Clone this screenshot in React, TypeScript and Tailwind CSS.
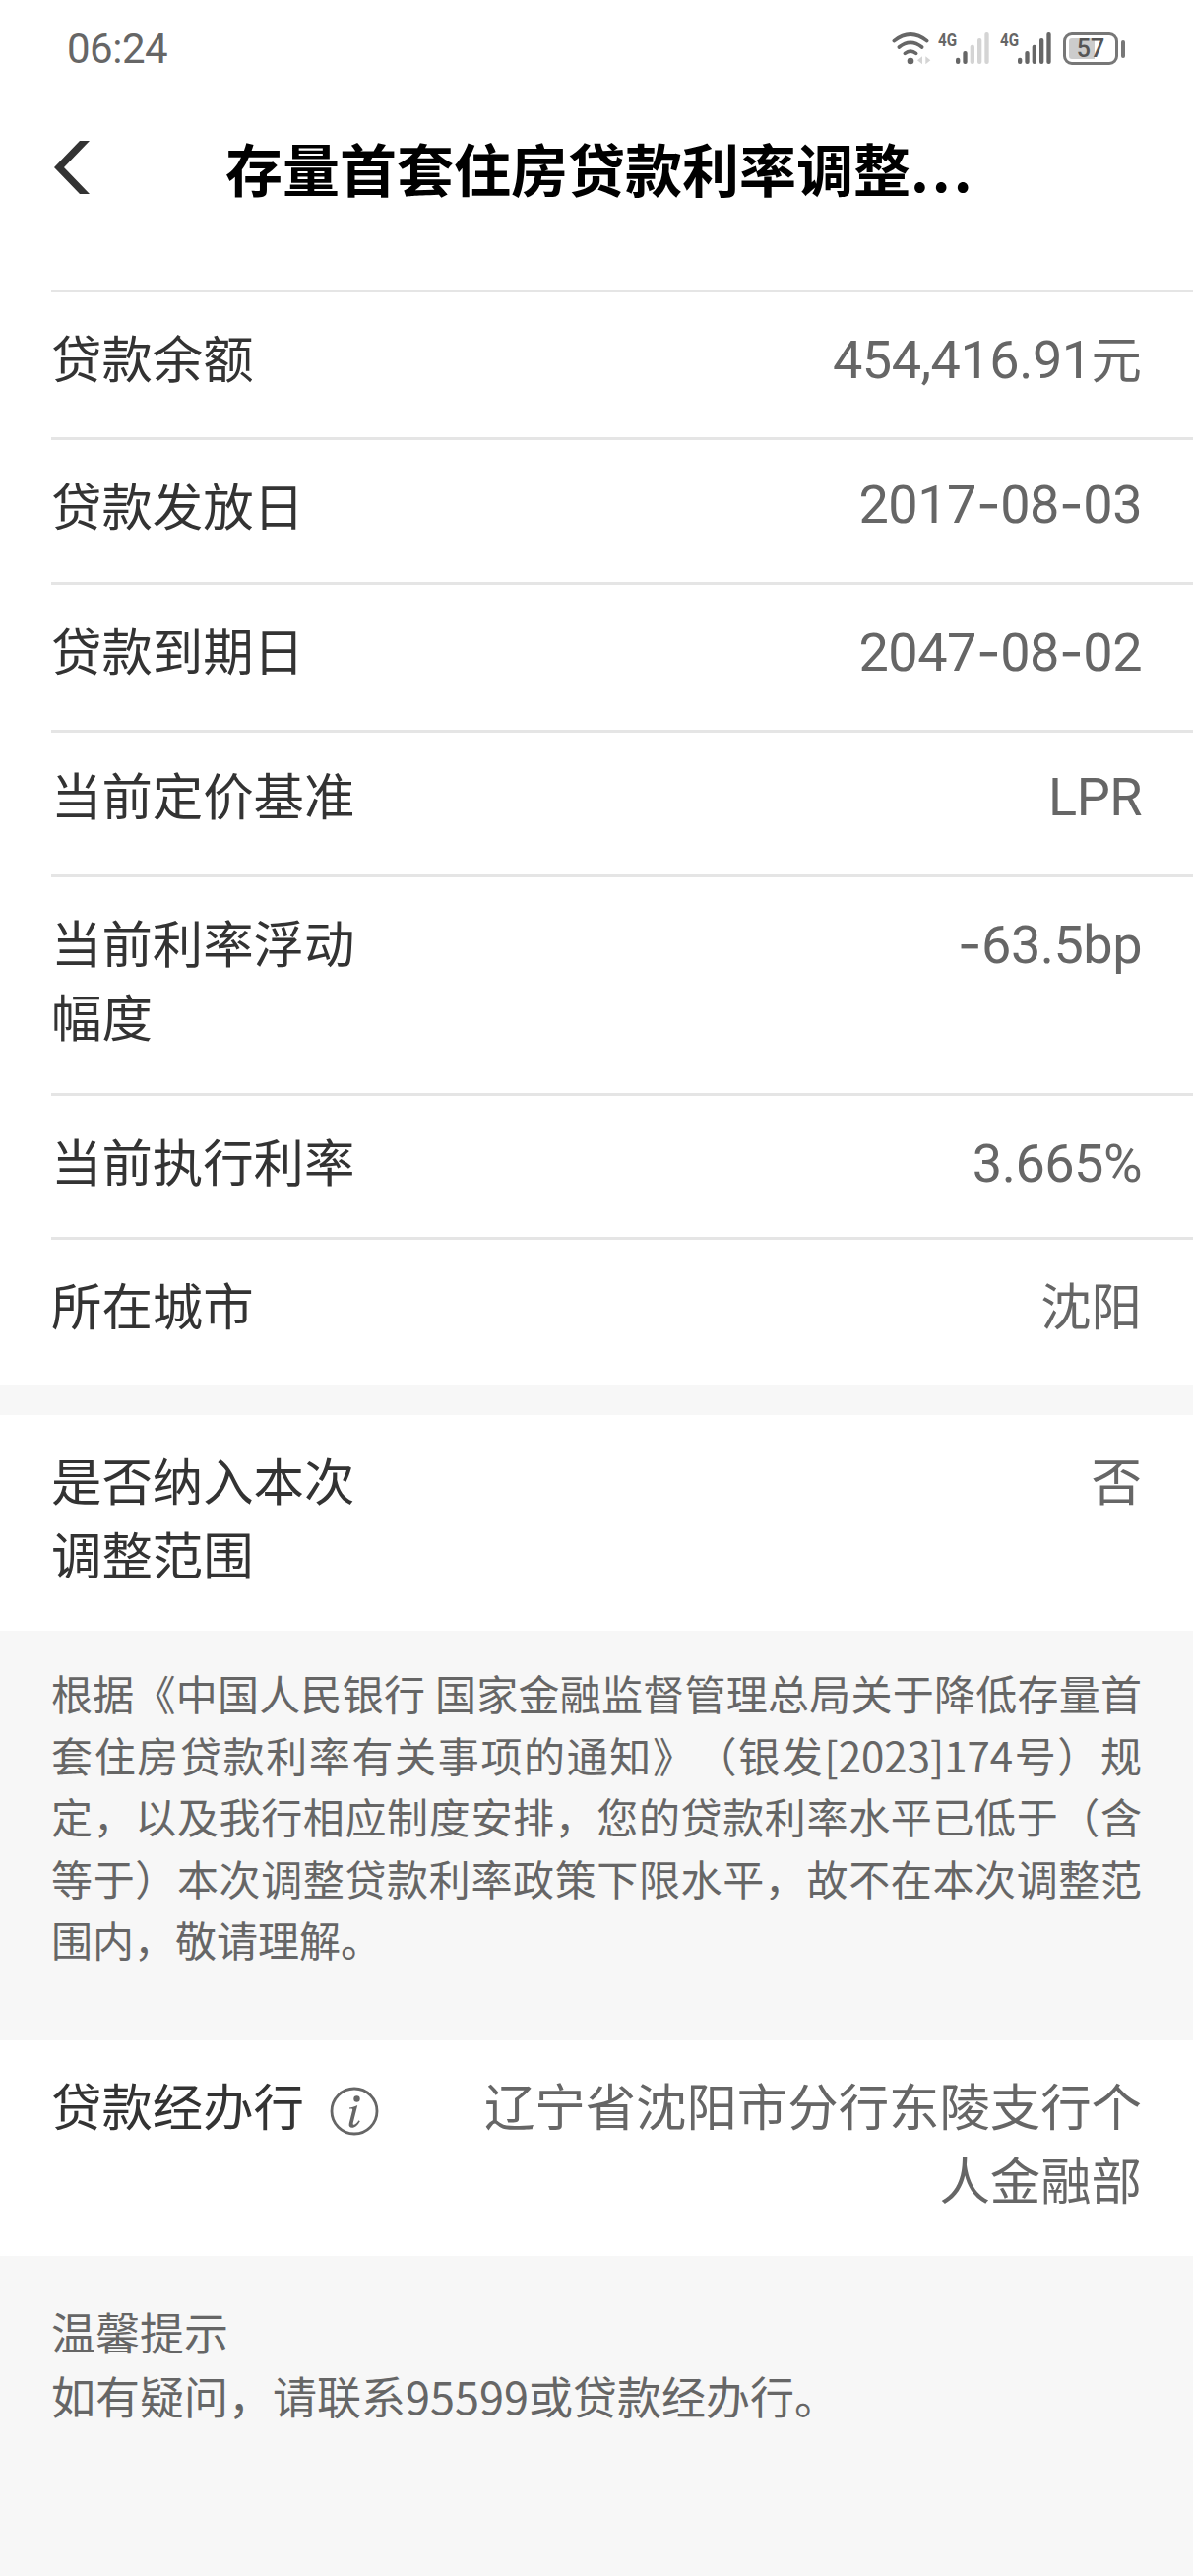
import React from 'react';

interface RowProps {
  label: React.ReactNode;
  value: React.ReactNode;
  className: string;
  valueClassName?: string;
}

// Latin letters and digits; hyphens are set wider than the digits' own font has them
const Num: React.FC<{ text: string }> = ({ text }) => (
  <span className="font-['Roboto',sans-serif] text-[54px] tracking-[-0.5px]">
    {text.split(/(-)/).map((part, i) =>
      part === '-' ? (
        <span key={i} className="font-['Inter',sans-serif]">-</span>
      ) : (
        part
      )
    )}
  </span>
);

const Row: React.FC<RowProps> = ({ label, value, className, valueClassName = '' }) => (
  <div className={`flex justify-between pr-[52px] leading-[75px] ${className}`}>
    <div className="text-[#333333] whitespace-nowrap">{label}</div>
    <div className={`text-right text-[#666666] whitespace-nowrap ${valueClassName}`}>{value}</div>
  </div>
);

const WifiIcon = () => (
  <svg width="40" height="33" viewBox="0 0 120 99" className="shrink-0">
    <g fill="none" stroke="#666666" strokeWidth="11" strokeLinecap="round">
      <path d="M7 26Q57 -14 107 26" />
      <path d="M22 45Q57 17 92 45" />
      <path d="M40 64Q57 51 74 64" />
    </g>
    <circle cx="57" cy="87" r="10" fill="#666666" />
    <path d="M93 73v24L78 85z" fill="#d4d4d4" />
    <path d="M103 73v24l15-12z" fill="#d4d4d4" />
  </svg>
);

const SignalIcon: React.FC<{ level: number }> = ({ level }) => (
  <svg width="34" height="32" viewBox="0 0 102 96" className="shrink-0">
    {[77, 57, 38, 18, 0].map((top, i) => (
      <rect
        key={top}
        x={i * 22}
        y={top}
        width="13"
        height={96 - top}
        rx="6"
        fill={i < level ? '#666666' : '#d4d4d4'}
      />
    ))}
  </svg>
);

const NetworkLabel = () => (
  <span className="block w-[18px] h-[18px] font-['Roboto',sans-serif] text-[19px] font-bold leading-[16px] text-[#666666] origin-left scale-x-[0.8]">
    4G
  </span>
);

const BatteryIcon = () => (
  <div className="flex items-center gap-[3px]">
    <div className="relative w-[56px] h-[33px] rounded-[9px] border-[3px] border-[#777777]">
      <div className="absolute left-[3px] top-[3px] w-[26px] h-[21px] rounded-l-[3px] bg-[#cccccc]" />
      <div className="relative text-center font-['Roboto',sans-serif] text-[25px] font-medium leading-[27px] text-[#555555]">57</div>
    </div>
    <div className="w-[4px] h-[18px] rounded-full bg-[#777777]" />
  </div>
);

const InfoIcon = () => (
  <svg width="50" height="50" viewBox="0 0 50 50" fill="none" className="mt-[20px]">
    <circle cx="25" cy="25" r="23" stroke="#666666" strokeWidth="2.8" />
    <circle cx="27.5" cy="12.5" r="3.2" fill="#666666" />
    <path d="M20 21.5c2-.2 5-1.2 8.2-2.5l-4.4 17.5c-.5 2 .2 2.8 1.6 2 1.600-.8 3-2.400 4.200-4.200l1.200.9c-2.200 3.800-5 6.600-8 6.600-2.600 0-3.700-1.800-3-4.600l3.300-13.200c.2-.9-.3-1.400-1.300-1.400H20z" fill="#666666" />
  </svg>
);

const notice = [
  '根据《中国人民银行 国家金融监督管理总局关于降低存量首',
  '套住房贷款利率有关事项的通知》（银发[2023]174号）规',
  '定，以及我行相应制度安排，您的贷款利率水平已低于（含',
  '等于）本次调整贷款利率政策下限水平，故不在本次调整范',
];

export default function App() {
  return (
    <div className="w-[1212px] h-[2616px] overflow-hidden bg-[#f7f7f7] font-['Noto_Sans_CJK_SC',sans-serif] text-[51.4px] [text-spacing-trim:space-all]">
      <div className="h-[294px] bg-white">
        <div className="flex h-[100px] items-start justify-between pl-[68px] pr-[69px]">
          <span className="pt-[25px] font-['Roboto',sans-serif] text-[42px] leading-[50px] tracking-[-0.5px] text-[#666666]">06:24</span>
          <div className="flex items-start pt-[33px]">
            <WifiIcon />
            <div className="ml-[7px] flex">
              <NetworkLabel />
              <SignalIcon level={2} />
            </div>
            <div className="ml-[11px] flex">
              <NetworkLabel />
              <SignalIcon level={5} />
            </div>
            <div className="ml-[12px]">
              <BatteryIcon />
            </div>
          </div>
        </div>
        <div className="flex h-[140px] items-center pl-[55px]">
          <svg width="36" height="54" viewBox="0 0 36 54">
            <path d="M0 27L26 0h10L10 27l26 27H26z" fill="#333333" />
          </svg>
          <h1 className="ml-[138px] whitespace-nowrap text-[58px] font-bold leading-[80px] text-black">
            存量首套住房贷款利率调整<span className="tracking-[3px]">...</span>
          </h1>
        </div>
      </div>

      <div className="h-[1112px] bg-white pl-[52px]">
        <Row className="h-[150px] border-t-[3px] border-[#e5e5e5] pt-[27px]" label="贷款余额" value={<><Num text="454,416.91" />元</>} />
        <Row className="h-[147px] border-t-[3px] border-[#e5e5e5] pt-[27px]" valueClassName="-mt-[3px]" label="贷款发放日" value={<Num text="2017-08-03" />} />
        <Row className="h-[150px] border-t-[3px] border-[#e5e5e5] pt-[27px]" label="贷款到期日" value={<Num text="2047-08-02" />} />
        <Row className="h-[147px] border-t-[3px] border-[#e5e5e5] pt-[24px]" label="当前定价基准" value={<Num text="LPR" />} />
        <Row className="h-[222px] border-t-[3px] border-[#e5e5e5] pt-[27px]" label={<>当前利率浮动<br />幅度</>} value={<Num text="-63.5bp" />} />
        <Row className="h-[146px] border-t-[3px] border-[#e5e5e5] pt-[27px]" label="当前执行利率" value={<Num text="3.665%" />} />
        <Row className="h-[150px] border-t-[3px] border-[#e5e5e5] pt-[27px]" label="所在城市" value="沈阳" />
      </div>

      <div className="mt-[31px] h-[219px] bg-white pl-[52px]">
        <Row className="pt-[27px]" label={<>是否纳入本次<br />调整范围</>} value="否" />
      </div>

      <div className="h-[416px] px-[52px] pt-[32px] text-[42px] leading-[62.5px] text-[#666666]">
        {notice.map((line) => (
          <p key={line} className="whitespace-nowrap [text-align-last:justify]">{line}</p>
        ))}
        <p>围内，敬请理解。</p>
      </div>

      <div className="h-[219px] bg-white pl-[52px]">
        <Row
          className="pt-[27px]"
          label={<span className="flex gap-[26px]">贷款经办行<InfoIcon /></span>}
          value={<>辽宁省沈阳市分行东陵支行个<br />人金融部</>}
        />
      </div>

      <div className="px-[52px] pt-[44px] text-[45px] leading-[65px] text-[#666666]">
        <p>温馨提示</p>
        <p>如有疑问，请联系95599或贷款经办行。</p>
      </div>
    </div>
  );
}
